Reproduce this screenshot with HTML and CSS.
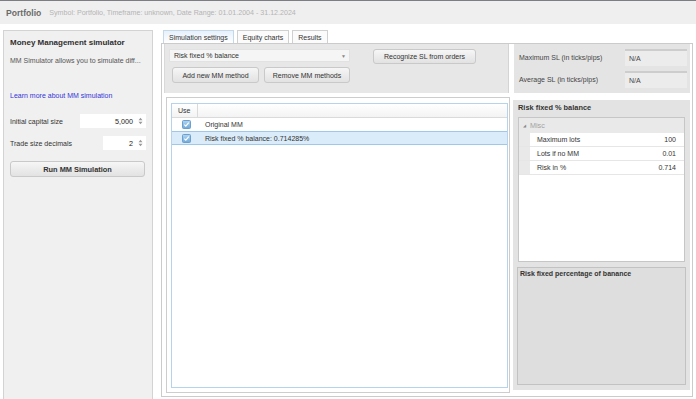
FILE: index.html
```html
<!DOCTYPE html>
<html>
<head>
<meta charset="utf-8">
<link rel="stylesheet" href="styles.css">
</head>
<body>
<div class="topline"></div>
<header class="header">
  <span class="h-title">Portfolio</span>
  <span class="h-sub">Symbol: Portfolio, Timeframe: unknown, Date Range: 01.01.2004 - 31.12.2024</span>
</header>
<div class="content">
  <aside class="left">
    <div class="l-title">Money Management simulator</div>
    <div class="l-desc">MM Simulator allows you to simulate diff...</div>
    <div class="l-link">Learn more about MM simulation</div>
    <div class="l-row l-row1">
      <span>Initial capital size</span>
      <div class="spin spin-wide"><span>5,000</span><svg class="arr" width="5" height="8" viewBox="0 0 5 8"><path d="M0.5 3.2 L2.5 0.8 L4.5 3.2Z M0.5 4.8 L2.5 7.2 L4.5 4.8Z" fill="#9a9a9a"/></svg></div>
    </div>
    <div class="l-row l-row2">
      <span>Trade size decimals</span>
      <div class="spin spin-narrow"><span>2</span><svg class="arr" width="5" height="8" viewBox="0 0 5 8"><path d="M0.5 3.2 L2.5 0.8 L4.5 3.2Z M0.5 4.8 L2.5 7.2 L4.5 4.8Z" fill="#9a9a9a"/></svg></div>
    </div>
    <div class="btn run-btn">Run MM Simulation</div>
  </aside>
  <main class="main">
    <div class="tabs">
      <div class="tab tab-active">Simulation settings</div>
      <div class="tab">Equity charts</div>
      <div class="tab">Results</div>
    </div>
    <div class="tabpage">
      <div class="top-row">
        <div class="top-left">
          <div class="tl-col">
            <div class="select"><span>Risk fixed % balance</span><span class="sel-arrow">▼</span></div>
            <div class="btn-row">
              <div class="btn btn-add">Add new MM method</div>
              <div class="btn btn-remove">Remove MM methods</div>
            </div>
          </div>
          <div class="btn btn-recog">Recognize SL from orders</div>
        </div>
        <div class="top-right">
          <div class="tr-row"><span>Maximum SL (in ticks/pips)</span><div class="na">N/A</div></div>
          <div class="tr-row"><span>Average SL (in ticks/pips)</span><div class="na">N/A</div></div>
        </div>
      </div>
      <div class="bottom-row">
        <div class="list-box">
          <div class="table">
            <div class="t-head"><div class="c-use">Use</div><div class="c-name"></div></div>
            <div class="t-row"><div class="c-use"><svg width="9" height="9" viewBox="0 0 9 9"><defs><linearGradient id="cb1" x1="0" y1="0" x2="0" y2="1"><stop offset="0" stop-color="#b4d6f2"/><stop offset="1" stop-color="#6fa9da"/></linearGradient></defs><rect x="0.5" y="0.5" width="8" height="8" rx="1" fill="url(#cb1)" stroke="#6b9fcc"/><path d="M2.3 4.6 L3.8 6.1 L6.8 2.6" fill="none" stroke="#fff" stroke-width="1.2"/></svg></div><div class="c-name">Original MM</div></div>
            <div class="t-row t-sel"><div class="c-use"><svg width="9" height="9" viewBox="0 0 9 9"><rect x="0.5" y="0.5" width="8" height="8" rx="1" fill="url(#cb1)" stroke="#6b9fcc"/><path d="M2.3 4.6 L3.8 6.1 L6.8 2.6" fill="none" stroke="#fff" stroke-width="1.2"/></svg></div><div class="c-name">Risk fixed % balance: 0.714285%</div></div>
          </div>
        </div>
        <div class="props">
          <div class="p-title">Risk fixed % balance</div>
          <div class="pgrid">
            <div class="p-cat"><span class="tri">◢</span>Misc</div>
            <div class="p-row"><div class="p-margin"></div><div class="p-label">Maximum lots</div><div class="p-val">100</div></div>
            <div class="p-row"><div class="p-margin"></div><div class="p-label">Lots if no MM</div><div class="p-val">0.01</div></div>
            <div class="p-row"><div class="p-margin"></div><div class="p-label">Risk in %</div><div class="p-val">0.714</div></div>
          </div>
          <div class="p-desc">Risk fixed percentage of banance</div>
        </div>
      </div>
    </div>
  </main>
</div>
</body>
</html>
```
FILE: styles.css
```css
* { box-sizing: border-box; }
html, body {
  margin: 0;
  padding: 0;
  width: 696px;
  height: 399px;
  overflow: hidden;
  background: #ffffff;
  font-family: "Liberation Sans", Arial, sans-serif;
  font-size: 7px;
  color: #333333;
}
.topline { height: 1px; background: #7d7e83; }
.header {
  height: 23px;
  background: #efefef;
  display: flex;
  align-items: center;
  padding-left: 6px;
}
.h-title { font-weight: bold; font-size: 8.6px; color: #6a6a6a; }
.h-sub { margin-left: 8px; font-size: 7.1px; color: #b4b4b4; }

.content { display: flex; padding-top: 6px; }
.left {
  margin-left: 3px;
  width: 150px;
  height: 372px;
  background: #f0f0f0;
  border: 1px solid #d3d3d3;
  padding: 0 6px;
}
.l-title { margin-top: 7px; height: 10px; line-height: 10px; font-weight: bold; font-size: 8px; color: #2f2f2f; }
.l-desc { margin-top: 8px; line-height: 10px; color: #555; }
.l-link { margin-top: 25px; line-height: 10px; color: #3434d8; }
.l-row { display: flex; align-items: center; justify-content: space-between; height: 14px; color: #333; }
.l-row1 { margin-top: 13px; }
.l-row2 { margin-top: 8px; }
.spin {
  height: 14px;
  background: #ffffff;
  display: flex;
  align-items: center;
  justify-content: flex-end;
  padding-right: 3px;
  font-size: 7.2px;
  color: #222;
}
.spin span { margin-right: 5px; }
.spin-wide { width: 66px; }
.spin-narrow { width: 43px; }
.btn {
  display: flex;
  align-items: center;
  justify-content: center;
  background: linear-gradient(#f6f6f6, #e2e2e2);
  border: 1px solid #c9c9c9;
  border-radius: 3px;
  color: #333;
  white-space: nowrap;
}
.run-btn {
  margin-top: 11px;
  width: 135px;
  height: 16px;
  font-weight: bold;
  font-size: 7.4px;
}

.main { margin-left: 8px; width: 532px; }
.tabs { display: flex; gap: 3px; height: 13px; padding-left: 2px; }
.tab {
  height: 13px;
  border: 1px solid #d0d0d0;
  border-bottom: none;
  background: #fbfbfb;
  padding: 0 5px;
  display: flex;
  align-items: center;
  color: #333;
}
.tab-active { background: linear-gradient(#e6f1fb, #ffffff); border-color: #c5d8ea; }
.tabpage {
  height: 354px;
  border: 1px solid #cbcbcb;
  display: flex;
  flex-direction: column;
}
.top-row { display: flex; height: 49px; }
.top-left {
  margin-left: 2px;
  width: 345px;
  background: #e7e7e7;
  border-left: 1px solid #d9d9d9;
  border-right: 1px solid #d4d4d4;
  padding: 5px 0 0 4px;
  display: flex;
  align-items: flex-start;
}
.tl-col { width: 181px; }
.select {
  height: 13px;
  background: #f5f5f5;
  border: 1px solid #e2e2e2;
  display: flex;
  align-items: center;
  justify-content: space-between;
  padding: 0 3px 0 4px;
}
.sel-arrow { font-size: 5px; color: #888; }
.btn-row { display: flex; gap: 5px; margin-top: 5px; padding-left: 3px; }
.btn-add { width: 87px; height: 16px; }
.btn-remove { width: 86px; height: 16px; }
.btn-recog { margin-left: 23px; width: 103px; height: 15px; }
.top-right {
  margin-left: 5px;
  width: 176px;
  background: #e4e4e4;
  padding: 5px 3px 0 5px;
  display: flex;
  flex-direction: column;
  gap: 5px;
}
.tr-row { display: flex; align-items: center; justify-content: space-between; height: 17px; color: #444; }
.na {
  width: 62px;
  height: 17px;
  background: #ececec;
  border-top: 2px solid #cdcdcd;
  padding-left: 4px;
  display: flex;
  align-items: center;
  color: #444;
}

.bottom-row { display: flex; margin-top: 4px; height: 296px; }
.list-box {
  margin-left: 4px;
  width: 344px;
  height: 296px;
  border: 1px solid #cdcdcd;
  padding: 5px 0 0 4px;
}
.table {
  width: 337px;
  height: 285px;
  border: 1px solid #b5d3ec;
}
.t-head { display: flex; height: 14px; border-bottom: 1px solid #dadada; background: linear-gradient(#ffffff, #f3f3f3); }
.t-head .c-use { border-right: 1px solid #dadada; justify-content: flex-start; padding-left: 6px; }
.c-use { width: 26px; display: flex; align-items: center; justify-content: center; padding-left: 2px; }
.c-name { flex: 1; display: flex; align-items: center; padding-left: 7px; }
.t-row { display: flex; height: 13px; }
.t-sel { height: 14px; background: #daecf9; border-top: 1px solid #9fc8e8; border-bottom: 1px solid #9fc8e8; }

.props {
  margin-left: 3px;
  margin-top: 3px;
  width: 177px;
  height: 290px;
  background: #e3e3e3;
  padding: 3px 4px 0 5px;
}
.p-title { height: 10px; line-height: 10px; font-weight: bold; font-size: 7.4px; color: #333; }
.pgrid {
  margin-top: 4px;
  width: 167px;
  height: 145px;
  background: #ffffff;
  border: 1px solid #c6c6c6;
}
.p-cat {
  height: 15px;
  background: #e9e9e9;
  color: #a2a2a2;
  display: flex;
  align-items: center;
  padding-left: 4px;
  font-size: 7.2px;
}
.tri { font-size: 4px; margin-right: 4px; color: #888; }
.p-row { display: flex; height: 14px; border-bottom: 1px solid #e6e6e6; color: #333; }
.p-margin { width: 11px; background: #e9e9e9; }
.p-label { flex: 1; display: flex; align-items: center; padding-left: 7px; }
.p-val { display: flex; align-items: center; padding-right: 8px; }
.p-desc {
  margin-top: 5px;
  margin-left: -1px;
  width: 169px;
  height: 118px;
  background: #dedede;
  border: 1px solid #c2c2c2;
  padding: 2px 2px;
  font-weight: bold;
  color: #333;
}
```
